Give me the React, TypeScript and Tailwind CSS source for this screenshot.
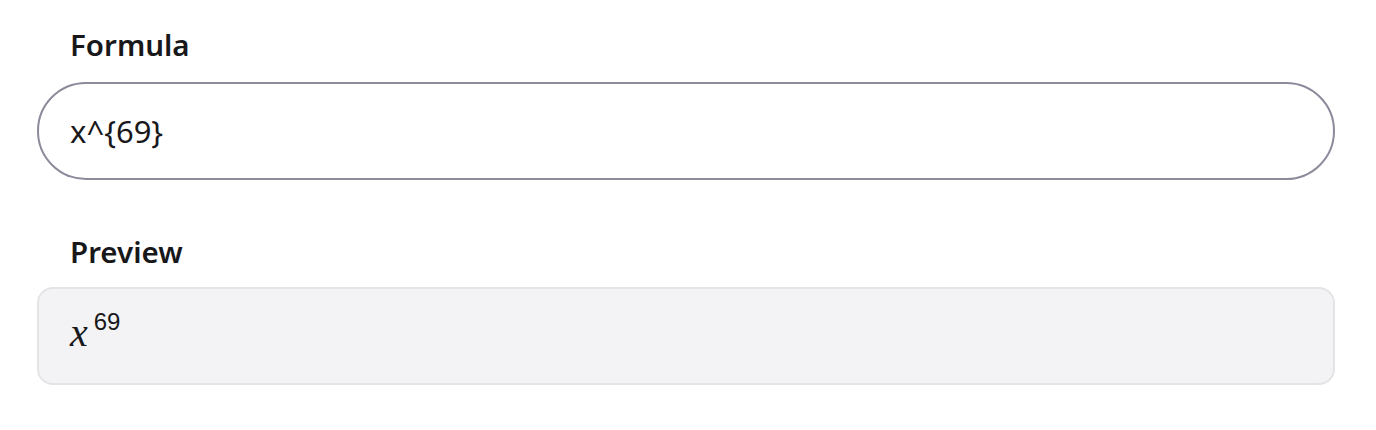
export default function App() {
  return (
    <div className="min-h-screen bg-white pl-[37px] pr-[41px] pt-[24px] font-['Noto_Sans',sans-serif] text-[#18181b]">
      <label htmlFor="formula" className="block pl-[33px] text-[29.5px] leading-[42px] font-semibold">
        Formula
      </label>
      <input
        id="formula"
        readOnly
        value="x^{69}"
        className="mt-[16px] block h-[98px] w-full rounded-full border-2 border-[#8d8a9b] px-[31px] text-[31px] text-[#18181b] outline-none"
      />

      <div className="mt-[51px] pl-[33px] text-[29.5px] leading-[42px] font-semibold">Preview</div>
      <div className="mt-[14px] h-[98px] rounded-2xl border-2 border-[#e4e4e7] bg-[#f3f3f5] px-[31px] pt-[21px]">
        <span className="inline-flex items-start leading-none">
          <span className="mt-[3px] font-['Liberation_Serif',serif] text-[40px] italic">x</span>
          <span className="ml-[6px] font-['Liberation_Sans',sans-serif] text-[24px]">69</span>
        </span>
      </div>
    </div>
  )
}
